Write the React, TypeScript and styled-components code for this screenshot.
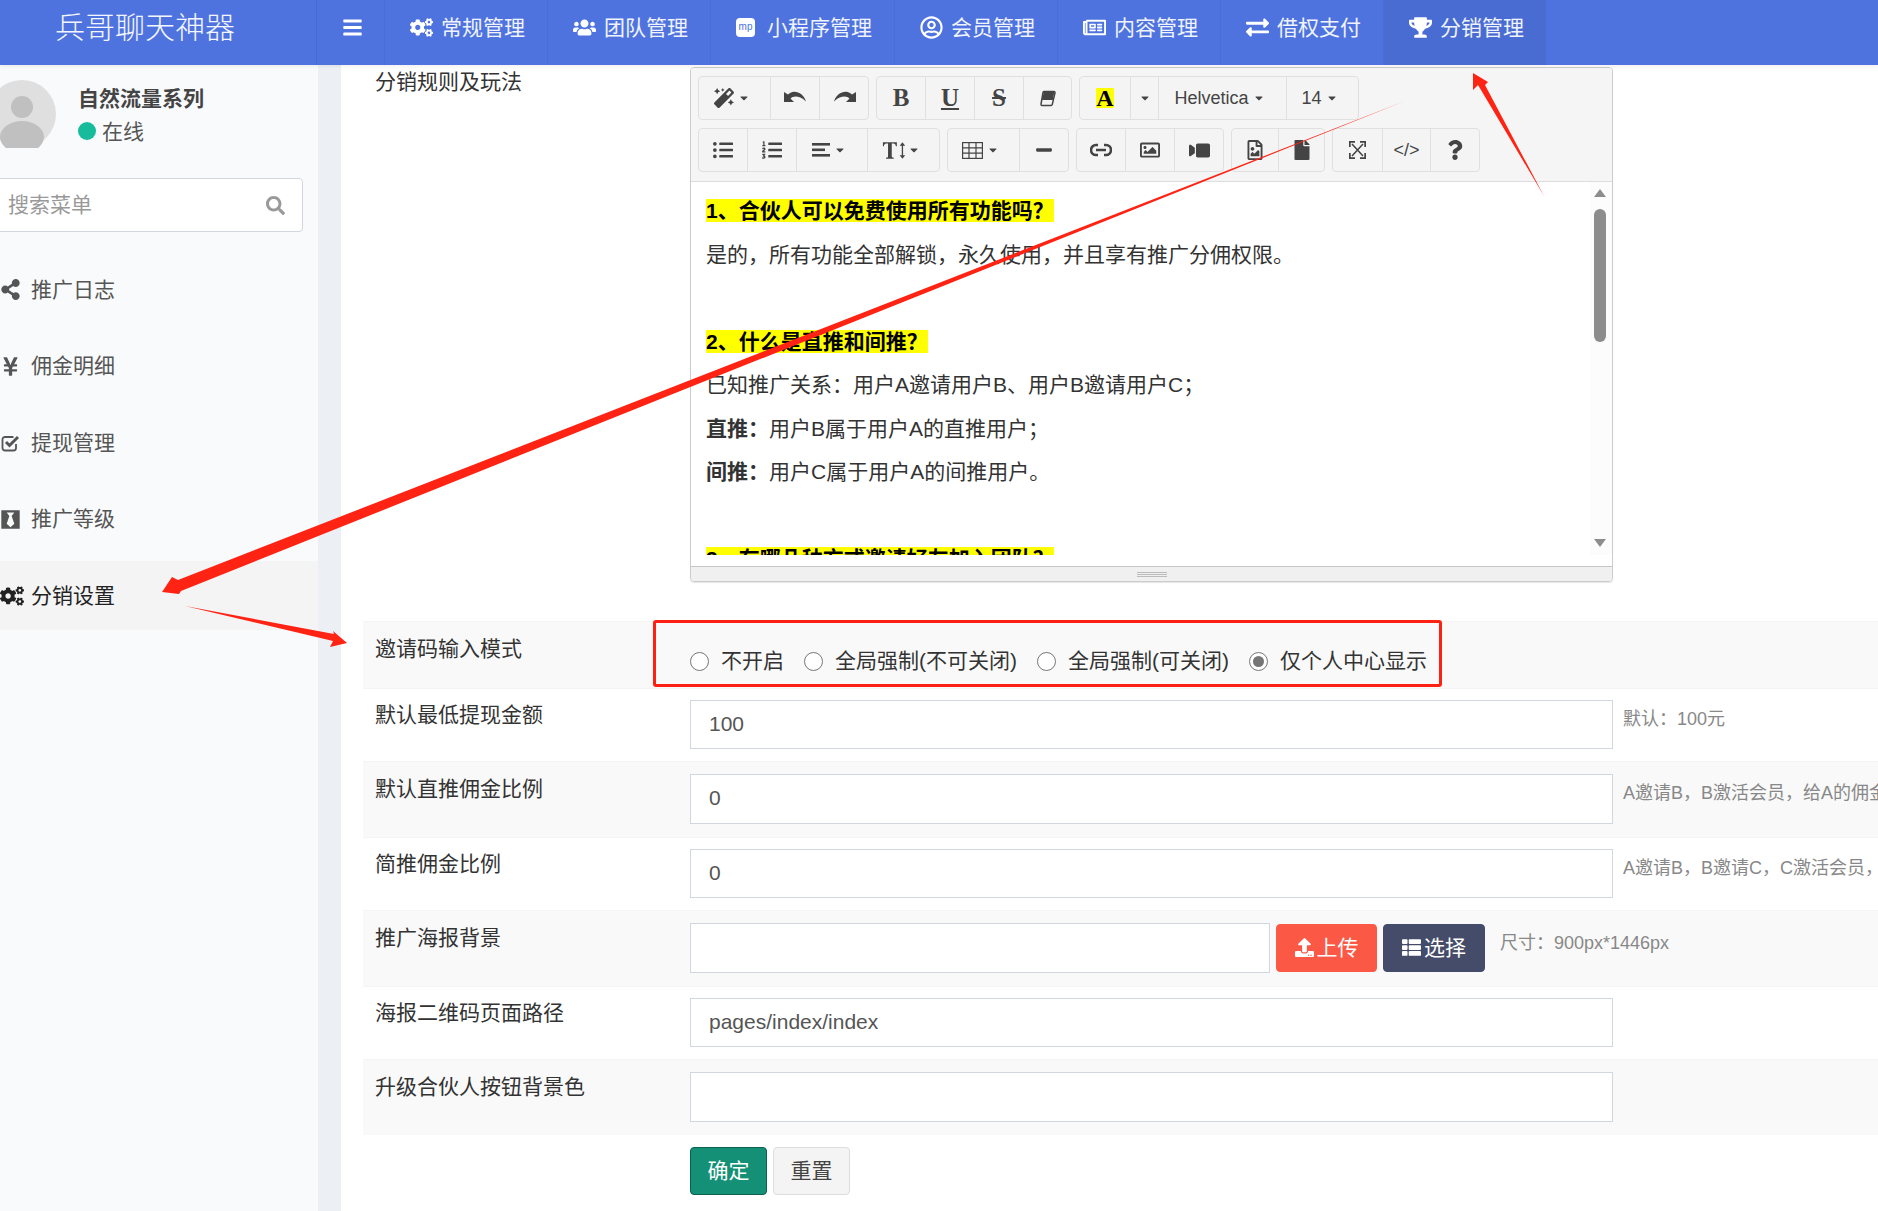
import React from "react";
import styled, { createGlobalStyle } from "styled-components";
import {
  FaBars, FaCogs, FaUsers, FaRegUserCircle, FaRegNewspaper, FaExchangeAlt, FaTrophy,
  FaShareAlt, FaYenSign, FaBlackTie, FaSearch, FaMagic,
  FaListUl, FaListOl, FaMinus, FaRegImage, FaVideo, FaRegFileImage, FaFile, FaQuestion,
  FaUpload, FaThList, FaCaretDown,
} from "react-icons/fa";

const Global = createGlobalStyle`
  html, body { margin: 0; padding: 0; width: 1878px; height: 1211px; overflow: hidden; background: #fff; }
  body { font-family: "Liberation Sans", "Noto Sans CJK SC", sans-serif; font-size: 21px; color: #333; }
  * { box-sizing: border-box; }
`;

const Page = styled.div`position: relative; width: 1878px; height: 1211px; overflow: hidden; display: flex; flex-direction: column;`;
const Header = styled.header`height: 65px; flex: none; display: flex; background: #4e73df; color: #fff; box-shadow: 0 1px 4px rgba(0,0,0,.08); position: relative; z-index: 1;`;
const Logo = styled.div`width: 317px; padding-left: 55px; font-size: 30px; line-height: 56px; font-weight: 300; color: #f4f6fd; border-right: 1px solid #4869ce;`;
const Toggle = styled.div`width: 67px; display: flex; align-items: center; justify-content: center; padding: 0 0 10px 3px; font-size: 21px;`;
const NavItem = styled.div<{ $active?: boolean }>`
  display: flex; align-items: center; padding: 0 22px 13px 25px; white-space: nowrap;
  border-left: 1px solid #4a6cd4; color: #f0f3fc;
  background: ${p => (p.$active ? "#496cd2" : "transparent")};
`;
const NavIcon = styled.span`width: 31px; flex: none; display: flex; align-items: center; font-size: 23px; color: #fff; margin-top: 3px;`;
const MpIcon = styled.span`width: 19px; height: 19px; border-radius: 4px; background: #fff; color: #4e73df; font-size: 10px; line-height: 18px; text-align: center;`;

const Body = styled.div`flex: 1; display: flex; min-height: 0;`;
const Sidebar = styled.aside`width: 318px; flex: none; background: #f9fafc; overflow: hidden;`;
const Gutter = styled.div`width: 23px; flex: none; background: #ecf0f4;`;
const UserPanel = styled.div`display: flex; gap: 22px; margin: 15px 0 0 -12px; align-items: center;`;
const AvatarBox = styled.svg`width: 68px; height: 68px; flex: none;`;
const UserText = styled.div`display: flex; flex-direction: column; gap: 2px; line-height: 31px; margin-top: 1px;`;
const UserName = styled.div`font-weight: 700; color: #444;`;
const Status = styled.div`display: flex; align-items: center; gap: 6px; color: #555;`;
const Dot = styled.span`width: 18px; height: 18px; border-radius: 50%; background: #18bc9c;`;
const SearchBox = styled.div`
  height: 54px; width: 313px; margin: 30px 0 23px -10px; background: #fff; border: 1px solid #d2d6de; border-radius: 4px;
  display: flex; align-items: center; justify-content: space-between; padding: 0 17px 5px 17px; color: #999;
`;
const SearchIcon = styled.span`font-size: 19px; color: #999; display: flex; margin-top: 5px;`;
const MenuItem = styled.div<{ $active?: boolean }>`
  height: 69px; margin-bottom: 7.5px; padding-bottom: 4px; display: flex; align-items: center;
  color: ${p => (p.$active ? "#222" : "#555")};
  background: ${p => (p.$active ? "#f4f4f5" : "transparent")};
`;
const MenuIcon = styled.span`width: 31px; flex: none; display: flex; justify-content: center; padding-right: 10px; font-size: 21px; margin-top: 4px;`;
const CogIcon = styled.span`display: flex; font-size: 24px; margin-left: 3px;`;

const Content = styled.main`flex: 1; padding-left: 22px; min-width: 0; background: #fff;`;
const EditorRow = styled.div`height: 556px; display: flex; padding-top: 2px;`;
const Label = styled.div`width: 327px; flex: none; padding: 0 0 0 12px; line-height: 30px; white-space: nowrap;`;
const Editor = styled.div`width: 923px; height: 515px; display: flex; flex-direction: column; border: 1px solid #ccc; border-radius: 4px; overflow: hidden; box-shadow: 0 1px 1px rgba(0,0,0,.1);`;
const Toolbar = styled.div`height: 114px; flex: none; background: #f5f5f5; border-bottom: 1px solid #ddd; padding: 8px 7px 0; display: flex; flex-direction: column; gap: 8px;`;
const ToolRow = styled.div`display: flex; gap: 7px;`;
const ToolGroup = styled.div`display: flex; height: 44px; border: 1px solid #e0e0e0; border-radius: 4px; background: #f4f4f4;`;
const ToolButton = styled.div<{ $w: number }>`
  width: ${p => p.$w}px; display: flex; align-items: center; justify-content: center; gap: 4px;
  color: #444; font-size: 18px; white-space: nowrap;
  & + & { border-left: 1px solid #e0e0e0; }
`;
const BigIcon = styled.span`display: flex; font-size: 20px; color: #444;`;
const FlipIcon = styled(BigIcon)`transform: scaleX(-1); font-size: 21px;`;
const Caret = styled.span`font-size: 12px; display: flex; color: #444;`;
const TightCaret = styled(Caret)`margin-left: -4px;`;
const ShiftLeft = styled.span`display: flex; align-items: center; gap: 4px; margin-right: 6px;`;
const SerifGlyph = styled.span<{ $u?: boolean; $s?: boolean }>`
  font-family: "Liberation Serif", serif; font-weight: 700; font-size: 25px; line-height: 24px; color: #444;
  text-decoration: ${p => (p.$u ? "underline" : p.$s ? "line-through" : "none")};
`;
const ColorGlyph = styled.span`font-family: "Liberation Serif", serif; font-weight: 700; font-size: 24px; line-height: 20px; height: 20px; width: 18px; text-align: center; background: #ff0; color: #000;`;
const CodeGlyph = styled.span`font-size: 18px; color: #444;`;
const EditorBody = styled.div`position: relative; flex: 1; background: #fff; padding: 7px 0 11px 15px; min-height: 0; display: flex;`;
const EditorText = styled.div`flex: 1; overflow: hidden; line-height: 43.5px; color: #333;`;
const Para = styled.div`min-height: 43.5px; white-space: nowrap;`;
const Mark = styled.strong`background: #ff0; color: #000; font-weight: 700;`;
const Scroll = styled.div`position: absolute; top: 0; right: 0; bottom: 11px; width: 22px; background: #fcfcfc;`;
const ScrollThumb = styled.div`position: absolute; top: 27px; left: 4px; width: 12px; height: 133px; border-radius: 6px; background: #8c8c8c;`;
const ScrollArrow = styled.div<{ $up?: boolean }>`
  position: absolute; left: 4px; ${p => (p.$up ? "top: 7px;" : "bottom: 8px;")}
  width: 0; height: 0; border-left: 6px solid transparent; border-right: 6px solid transparent;
  ${p => (p.$up ? "border-bottom: 8px solid #8c8c8c;" : "border-top: 8px solid #8c8c8c;")}
`;
const StatusBar = styled.div`height: 15px; flex: none; background: #f0f0f0; border-top: 1px solid #c6c6c6; display: flex; justify-content: center; align-items: center;`;
const Grip = styled.div`width: 30px; height: 5px; border-top: 1px solid #bbb; border-bottom: 1px solid #bbb; position: relative;
  &::after { content: ""; position: absolute; left: 0; right: 0; top: 1px; height: 1px; background: #bbb; }`;

const Row = styled.div<{ $striped?: boolean; $short?: boolean }>`
  display: flex; white-space: nowrap;
  height: ${p => (p.$short ? 67 : p.$striped ? 76 : 73)}px;
  padding-top: ${p => (p.$striped ? 13 : 12)}px;
  background: ${p => (p.$striped ? "#f9f9f9" : "#fff")};
  border-top: 1px solid #f4f4f4;
`;
const RowLabel = styled(Label)`margin-top: -1px;`;
const Input = styled.div<{ $w?: number; $tall?: boolean }>`
  width: ${p => p.$w ?? 923}px; height: ${p => (p.$tall ? 50 : 49)}px; flex: none; background: #fff; border: 1px solid #d2d6de;
  padding: 0 18px; line-height: 45px; color: #555; margin-top: -1px;
`;
const Hint = styled.div<{ $far?: boolean }>`margin-left: ${p => (p.$far ? 15 : 10)}px; font-size: 18px; line-height: 26px; padding-top: ${p => (p.$far ? 6 : 5)}px; color: #888;`;
const RadioGroup = styled.div`display: flex; align-items: center; height: 48px;`;
const RadioOption = styled.label`display: flex; align-items: center; gap: 12px; margin-right: 20px;`;
const RadioInput = styled.input`
  appearance: none; margin: 4px 0 0; width: 19px; height: 19px; border-radius: 50%; border: 1.5px solid #767676; background: #fff; position: relative;
  &:checked::after { content: ""; position: absolute; inset: 3px; border-radius: 50%; background: #767676; }
`;
const Btn = styled.div<{ $bg: string; $fg: string; $bd: string; $w: number }>`
  width: ${p => p.$w}px; height: 48px; margin-left: 6px; padding-bottom: 4px; border-radius: 4px; background: ${p => p.$bg}; color: ${p => p.$fg};
  border: 1px solid ${p => p.$bd}; display: flex; align-items: center; justify-content: center; gap: 3px; flex: none; font-size: 21px;
`;
const BtnIcon = styled.span`display: flex; font-size: 19px; margin-top: 3px;`;
const Actions = styled.div`display: flex; padding: 12px 0 0 327px;`;
const FirstBtn = styled(Btn)`margin-left: 0;`;

const Overlay = styled.svg`position: absolute; inset: 0; width: 1878px; height: 1211px; z-index: 5; pointer-events: none;`;
const RedBox = styled.div`position: absolute; left: 653px; top: 620px; width: 789px; height: 67px; border: 3px solid #ff2014; border-radius: 3px; z-index: 5;`;

const CheckSquareIcon = () => (
  <svg width="19" height="18" viewBox="0 0 19 18" fill="none" stroke="currentColor">
    <path d="M15 10v4a2.500 2.500 0 0 1-2.500 2.500H4A2.500 2.500 0 0 1 1.500 14V5.500A2.500 2.500 0 0 1 4 3h8.500" strokeWidth="1.8" />
    <path d="M5 8l3.500 3.500L17 3" strokeWidth="3" />
  </svg>
);
const EraserIcon = () => (
  <svg width="16" height="17" viewBox="0 0 16 17" fill="none" stroke="#444" strokeWidth="1.5">
    <path d="M4 1.500h10a1 1 0 0 1 1 1.300l-2.700 11.500a1.500 1.500 0 0 1-1.500 1.200H2a1 1 0 0 1-1-1.300L3 2.500a1.200 1.200 0 0 1 1-1Z" />
    <path d="M4 1h10.500L12.800 10H2Z" fill="#444" stroke="none" />
  </svg>
);
const LinkIcon = () => (
  <svg width="22" height="14" viewBox="0 0 22 14" fill="none" stroke="#444" strokeWidth="2.6">
    <path d="M8 2H6a5 5 0 0 0 0 10h2M14 2h2a5 5 0 0 1 0 10h-2M6 7h10" />
  </svg>
);
const TableIcon = () => (
  <svg width="21" height="17" viewBox="0 0 21 17" fill="none" stroke="#444" strokeWidth="1.2">
    <rect x=".6" y=".6" width="19.8" height="15.8" /><path d="M7 .6v15.8M14 .6v15.8M.6 5.800h19.800M.6 11.200h19.800" />
  </svg>
);
const AlignIcon = () => (
  <svg width="18" height="14" viewBox="0 0 18 14" fill="#444"><rect width="18" height="2.6" /><rect y="5.5" width="13" height="2.6" /><rect y="11" width="18" height="2.6" /></svg>
);
const UndoIcon = ({ flip }: { flip?: boolean }) => (
  <svg width="23" height="14" viewBox="0 0 23 14" fill="#444" style={flip ? { transform: "scaleX(-1)" } : undefined}>
    <path d="M0 1v10h10L6.500 7.500C9 5 15 4 22 10.500 20 4 15 .5 10 .8 7.500 1 5.500 2.200 4 3.500Z" />
  </svg>
);
const ExpandIcon = () => (
  <svg width="17" height="18" viewBox="0 0 17 18" fill="none" stroke="#444">
    <path d="M3 3l11 12M14 3L3 15" strokeWidth="1.5" />
    <path d="M.8 6V.8H6M11 .8h5.200V6M16.200 12v5.200H11M6 17.200H.8V12" strokeWidth="1.800" />
  </svg>
);
const TextHeightIcon = () => (
  <svg width="26" height="19" viewBox="0 0 28 20" fill="#444">
    <path d="M1 1h15v4.500h-1C14.500 3 14 2.500 10.500 2.500v14c0 1 1 1.200 2.200 1.200V19H4.300v-1.300c1.200 0 2.200-.2 2.200-1.200v-14C3 2.500 2.500 3 2 5.500H1Z" />
    <path d="M22 1l3 4h-2.300v10H25l-3 4-3-4h2.300V5H19Z" />
  </svg>
);

const nav = [
  { i: <FaCogs />, t: "常规管理" },
  { i: <FaUsers />, t: "团队管理" },
  { i: <MpIcon>mp</MpIcon>, t: "小程序管理" },
  { i: <FaRegUserCircle />, t: "会员管理" },
  { i: <FaRegNewspaper />, t: "内容管理" },
  { i: <FaExchangeAlt />, t: "借权支付" },
  { i: <FaTrophy />, t: "分销管理", active: true },
];
const menu = [
  { i: <FaShareAlt />, t: "推广日志" },
  { i: <FaYenSign />, t: "佣金明细" },
  { i: <CheckSquareIcon />, t: "提现管理" },
  { i: <FaBlackTie />, t: "推广等级" },
  { i: <CogIcon><FaCogs /></CogIcon>, t: "分销设置", active: true },
];
const down = <Caret><FaCaretDown /></Caret>;

const toolbar1: { w: number; c: React.ReactNode }[][] = [
  [{ w: 71, c: <ShiftLeft><BigIcon><FaMagic /></BigIcon>{down}</ShiftLeft> }, { w: 49, c: <UndoIcon /> }, { w: 49, c: <UndoIcon flip /> }],
  [{ w: 48, c: <SerifGlyph>B</SerifGlyph> }, { w: 49, c: <SerifGlyph $u>U</SerifGlyph> }, { w: 49, c: <SerifGlyph $s>S</SerifGlyph> }, { w: 48, c: <EraserIcon /> }],
  [{ w: 50, c: <ColorGlyph>A</ColorGlyph> }, { w: 28, c: down }, { w: 128, c: <ShiftLeft>Helvetica{down}</ShiftLeft> }, { w: 72, c: <ShiftLeft>14{down}</ShiftLeft> }],
];
const toolbar2: { w: number; c: React.ReactNode }[][] = [
  [{ w: 48, c: <BigIcon><FaListUl /></BigIcon> }, { w: 49, c: <BigIcon><FaListOl /></BigIcon> }, { w: 71, c: <ShiftLeft><AlignIcon />{down}</ShiftLeft> }, { w: 72, c: <ShiftLeft><TextHeightIcon /><TightCaret><FaCaretDown /></TightCaret></ShiftLeft> }],
  [{ w: 71, c: <ShiftLeft><TableIcon />{down}</ShiftLeft> }, { w: 49, c: <FaMinus /> }],
  [{ w: 48, c: <LinkIcon /> }, { w: 49, c: <BigIcon><FaRegImage /></BigIcon> }, { w: 49, c: <FlipIcon><FaVideo /></FlipIcon> }],
  [{ w: 46, c: <BigIcon><FaRegFileImage /></BigIcon> }, { w: 46, c: <BigIcon><FaFile /></BigIcon> }],
  [{ w: 49, c: <ExpandIcon /> }, { w: 48, c: <CodeGlyph>&lt;/&gt;</CodeGlyph> }, { w: 49, c: <BigIcon><FaQuestion /></BigIcon> }],
];
const Tools = ({ groups }: { groups: { w: number; c: React.ReactNode }[][] }) => (
  <ToolRow>
    {groups.map((g, i) => (
      <ToolGroup key={i}>{g.map((b, j) => <ToolButton key={j} $w={b.w}>{b.c}</ToolButton>)}</ToolGroup>
    ))}
  </ToolRow>
);

export default function App() {
  return (
    <Page>
      <Global />
      <Header>
        <Logo>兵哥聊天神器</Logo>
        <Toggle><FaBars /></Toggle>
        {nav.map(n => (
          <NavItem key={n.t} $active={n.active}><NavIcon>{n.i}</NavIcon>{n.t}</NavItem>
        ))}
      </Header>
      <Body>
        <Sidebar>
          <UserPanel>
            <AvatarBox viewBox="0 0 68 68">
              <circle cx="34" cy="34" r="34" fill="#dfdfdf" />
              <circle cx="34" cy="27" r="11" fill="#c0c0c0" />
              <ellipse cx="34" cy="57" rx="22" ry="16" fill="#c0c0c0" />
            </AvatarBox>
            <UserText>
              <UserName>自然流量系列</UserName>
              <Status><Dot />在线</Status>
            </UserText>
          </UserPanel>
          <SearchBox>搜索菜单<SearchIcon><FaSearch /></SearchIcon></SearchBox>
          {menu.map(m => (
            <MenuItem key={m.t} $active={m.active}><MenuIcon>{m.i}</MenuIcon>{m.t}</MenuItem>
          ))}
        </Sidebar>
        <Gutter />
        <Content>
          <EditorRow>
            <Label>分销规则及玩法</Label>
            <Editor>
              <Toolbar>
                <Tools groups={toolbar1} />
                <Tools groups={toolbar2} />
              </Toolbar>
              <EditorBody>
                <EditorText>
                  <Para><Mark>1、合伙人可以免费使用所有功能吗？</Mark></Para>
                  <Para>是的，所有功能全部解锁，永久使用，并且享有推广分佣权限。</Para>
                  <Para />
                  <Para><Mark>2、什么是直推和间推？</Mark></Para>
                  <Para>已知推广关系：用户A邀请用户B、用户B邀请用户C；</Para>
                  <Para><strong>直推：</strong>用户B属于用户A的直推用户；</Para>
                  <Para><strong>间推：</strong>用户C属于用户A的间推用户。</Para>
                  <Para />
                  <Para><Mark>3、有哪几种方式邀请好友加入团队？</Mark></Para>
                </EditorText>
                <Scroll><ScrollArrow $up /><ScrollThumb /><ScrollArrow /></Scroll>
              </EditorBody>
              <StatusBar><Grip /></StatusBar>
            </Editor>
          </EditorRow>
          <Row $striped $short>
            <RowLabel>邀请码输入模式</RowLabel>
            <RadioGroup>
              <RadioOption><RadioInput type="radio" name="m" />不开启</RadioOption>
              <RadioOption><RadioInput type="radio" name="m" />全局强制(不可关闭)</RadioOption>
              <RadioOption><RadioInput type="radio" name="m" />全局强制(可关闭)</RadioOption>
              <RadioOption><RadioInput type="radio" name="m" defaultChecked />仅个人中心显示</RadioOption>
            </RadioGroup>
          </Row>
          <Row>
            <RowLabel>默认最低提现金额</RowLabel>
            <Input>100</Input>
            <Hint>默认：100元</Hint>
          </Row>
          <Row $striped>
            <RowLabel>默认直推佣金比例</RowLabel>
            <Input $tall>0</Input>
            <Hint>A邀请B，B激活会员，给A的佣金比例</Hint>
          </Row>
          <Row>
            <RowLabel>简推佣金比例</RowLabel>
            <Input>0</Input>
            <Hint>A邀请B，B邀请C，C激活会员，给A的佣金比例</Hint>
          </Row>
          <Row $striped>
            <RowLabel>推广海报背景</RowLabel>
            <Input $w={580} $tall />
            <Btn $bg="#fb5845" $fg="#fff" $bd="#fb5845" $w={101}><BtnIcon><FaUpload /></BtnIcon>上传</Btn>
            <Btn $bg="#444c69" $fg="#fff" $bd="#444c69" $w={102}><BtnIcon><FaThList /></BtnIcon>选择</Btn>
            <Hint $far>尺寸：900px*1446px</Hint>
          </Row>
          <Row>
            <RowLabel>海报二维码页面路径</RowLabel>
            <Input>pages/index/index</Input>
          </Row>
          <Row $striped>
            <RowLabel>升级合伙人按钮背景色</RowLabel>
            <Input $tall />
          </Row>
          <Actions>
            <FirstBtn $bg="#139075" $fg="#fff" $bd="#0d5f50" $w={77}>确定</FirstBtn>
            <Btn $bg="#f4f4f4" $fg="#444" $bd="#ddd" $w={77}>重置</Btn>
          </Actions>
        </Content>
      </Body>
      <RedBox />
      <Overlay viewBox="0 0 1878 1211">
        <g fill="#ff2314">
          <polygon points="1405,101 178,580 172,577 162,592 179,594 181,591" />
          <polygon points="185,606 334,634 333,631 347,643 330,647 333,641" />
          <polygon points="1544,196 1485,85 1488,82 1473,73 1473,90 1478,85" />
        </g>
      </Overlay>
    </Page>
  );
}
